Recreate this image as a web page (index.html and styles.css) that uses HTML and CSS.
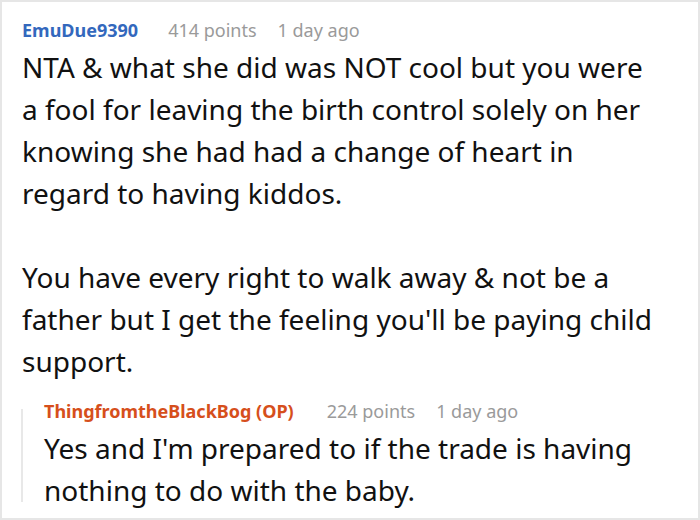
FILE: index.html
```html
<!DOCTYPE html>
<html lang="en">
<head>
<meta charset="utf-8">
<title>Comment</title>
<link rel="stylesheet" href="styles.css">
</head>
<body>
<div class="card">
  <div class="comment">
    <div class="meta">
      <span class="author">EmuDue9390</span>
      <span class="points">414 points</span>
      <span class="time">1 day ago</span>
    </div>
    <div class="body">
      <p>NTA &amp; what she did was NOT cool but you were a fool for leaving the birth control solely on her knowing she had had a change of heart in regard to having kiddos.</p>
      <p>You have every right to walk away &amp; not be a father but I get the feeling you'll be paying child support.</p>
    </div>
    <div class="reply">
      <div class="meta">
        <span class="author op">ThingfromtheBlackBog (OP)</span>
        <span class="points">224 points</span>
        <span class="time">1 day ago</span>
      </div>
      <div class="body">
        <p>Yes and I'm prepared to if the trade is having nothing to do with the baby.</p>
      </div>
    </div>
  </div>
</div>
</body>
</html>
```
FILE: styles.css
```css
html, body {
  margin: 0;
  padding: 0;
  background: #ffffff;
}
.card {
  box-sizing: border-box;
  width: 700px;
  height: 520px;
  border: 2px solid #e6e6e6;
  padding: 16px 43px 0 20px;
  font-family: "Noto Sans", "Open Sans", sans-serif;
  color: #111111;
  overflow: hidden;
}
.meta {
  display: flex;
  align-items: baseline;
  font-size: 18px;
  line-height: 24px;
  white-space: nowrap;
}
.author {
  font-weight: 700;
  color: #3368bd;
  margin-right: 30px;
}
.author.op {
  color: #d64f1c;
  margin-right: 33px;
}
.points {
  color: #9a9a9a;
  margin-right: 21px;
}
.time {
  color: #9a9a9a;
}
.body {
  font-size: 28px;
  line-height: 42px;
  margin-top: 4px;
}
.body p {
  margin: 0 0 42px 0;
}
.body p:last-child {
  margin-bottom: 0;
}
.reply {
  position: relative;
  margin-top: 17px;
  padding-left: 22px;
}
.reply::before {
  content: "";
  position: absolute;
  left: -1px;
  top: 10px;
  bottom: 9px;
  width: 2px;
  background: #e8e8e8;
}
```
